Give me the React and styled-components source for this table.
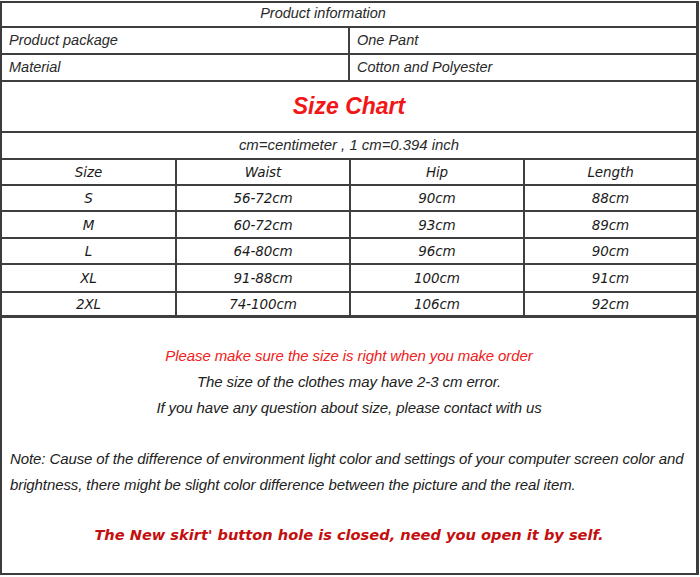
import React from "react";
import styled, { createGlobalStyle } from "styled-components";

const Global = createGlobalStyle`
  html, body { margin: 0; padding: 0; background: #fff; }
  body { font-family: "Liberation Sans", Arial, sans-serif; }
`;

const Sheet = styled.div`
  box-sizing: border-box;
  width: 699px;
  height: 574px;
  margin-top: 1px;
  border: 2px solid #3c3c3c;
  border-right-width: 3px;
  display: flex;
  flex-direction: column;
  background: #fff;
`;

const Row = styled.div`
  box-sizing: border-box;
  display: grid;
  grid-template-columns: ${(p) => p.$cols || "1fr"};
  height: ${(p) => p.$h}px;
  border-bottom: ${(p) => p.$bw || 2}px solid #3f3f3f;
  flex: none;
`;

const InfoCell = styled.div`
  box-sizing: border-box;
  display: flex;
  align-items: center;
  justify-content: ${(p) => (p.$center ? "center" : "flex-start")};
  padding: ${(p) => p.$pad || "0 0 1px 7px"};
  border-left: ${(p) => (p.$divider ? "2px solid #3f3f3f" : "none")};
  font-family: "Liberation Sans", Arial, sans-serif;
  font-style: italic;
  font-size: ${(p) => p.$size || 14.5}px;
  color: #2a2a2a;
  white-space: nowrap;
`;

const Title = styled.div`
  display: flex;
  align-items: center;
  justify-content: center;
  padding-bottom: 1px;
  font-family: "Liberation Sans", Arial, sans-serif;
  font-weight: bold;
  font-style: italic;
  font-size: 23px;
  color: #f21616;
`;

const SizeCell = styled.div`
  box-sizing: border-box;
  display: flex;
  align-items: center;
  justify-content: center;
  border-left: ${(p) => (p.$divider ? "2px solid #3f3f3f" : "none")};
  font-family: "DejaVu Sans", Verdana, sans-serif;
  font-style: italic;
  font-size: 13.5px;
  color: #1a1a1a;
  letter-spacing: -0.1px;
`;

const Notes = styled.div`
  flex: 1;
  display: flex;
  flex-direction: column;
  padding-top: 25px;
`;

const CenterLine = styled.div`
  text-align: center;
  font-family: "Liberation Sans", Arial, sans-serif;
  font-style: italic;
  font-size: 15px;
  line-height: 26px;
  letter-spacing: -0.1px;
  color: ${(p) => p.$color || "#222"};
`;

const NoteText = styled.div`
  margin-top: 25px;
  padding: 0 8px;
  font-family: "Liberation Sans", Arial, sans-serif;
  font-style: italic;
  font-size: 15px;
  line-height: 26px;
  letter-spacing: -0.1px;
  color: #222;
`;

const Warning = styled.div`
  margin-top: 28px;
  text-align: center;
  font-family: "DejaVu Sans", Verdana, sans-serif;
  font-weight: bold;
  font-style: italic;
  font-size: 14.6px;
  color: #c40f0f;
`;

const sizeCols = "173px 174px 174px 1fr";

const sizes = [
  { s: "S", w: "56-72cm", h: "90cm", l: "88cm", rh: 26 },
  { s: "M", w: "60-72cm", h: "93cm", l: "89cm", rh: 27 },
  { s: "L", w: "64-80cm", h: "96cm", l: "90cm", rh: 26 },
  { s: "XL", w: "91-88cm", h: "100cm", l: "91cm", rh: 28 },
  { s: "2XL", w: "74-100cm", h: "106cm", l: "92cm", rh: 25, bw: 3 },
];

export default function App() {
  return (
    <>
      <Global />
      <Sheet>
        <Row $h={25}>
          <InfoCell $center $pad="0 52px 3px 0">Product information</InfoCell>
        </Row>
        <Row $h={27} $cols="346px 1fr">
          <InfoCell>Product package</InfoCell>
          <InfoCell $divider>One Pant</InfoCell>
        </Row>
        <Row $h={27} $cols="346px 1fr">
          <InfoCell>Material</InfoCell>
          <InfoCell $divider>Cotton and Polyester</InfoCell>
        </Row>
        <Row $h={51}>
          <Title>Size Chart</Title>
        </Row>
        <Row $h={27}>
          <InfoCell $center $pad="0 0 1px 0" $size={14.9}>cm=centimeter , 1 cm=0.394 inch</InfoCell>
        </Row>
        <Row $h={26} $cols={sizeCols}>
          <SizeCell>Size</SizeCell>
          <SizeCell $divider>Waist</SizeCell>
          <SizeCell $divider>Hip</SizeCell>
          <SizeCell $divider>Length</SizeCell>
        </Row>
        {sizes.map((r) => (
          <Row key={r.s} $h={r.rh} $bw={r.bw} $cols={sizeCols}>
            <SizeCell>{r.s}</SizeCell>
            <SizeCell $divider>{r.w}</SizeCell>
            <SizeCell $divider>{r.h}</SizeCell>
            <SizeCell $divider>{r.l}</SizeCell>
          </Row>
        ))}
        <Notes>
          <CenterLine $color="#f02020">
            Please make sure the size is right when you make order
          </CenterLine>
          <CenterLine>The size of the clothes may have 2-3 cm error.</CenterLine>
          <CenterLine>If you have any question about size, please contact with us</CenterLine>
          <NoteText>
            Note: Cause of the difference of environment light color and settings of your computer screen color and
            brightness, there might be slight color difference between the picture and the real item.
          </NoteText>
          <Warning>The New skirt' button hole is closed, need you open it by self.</Warning>
        </Notes>
      </Sheet>
    </>
  );
}
